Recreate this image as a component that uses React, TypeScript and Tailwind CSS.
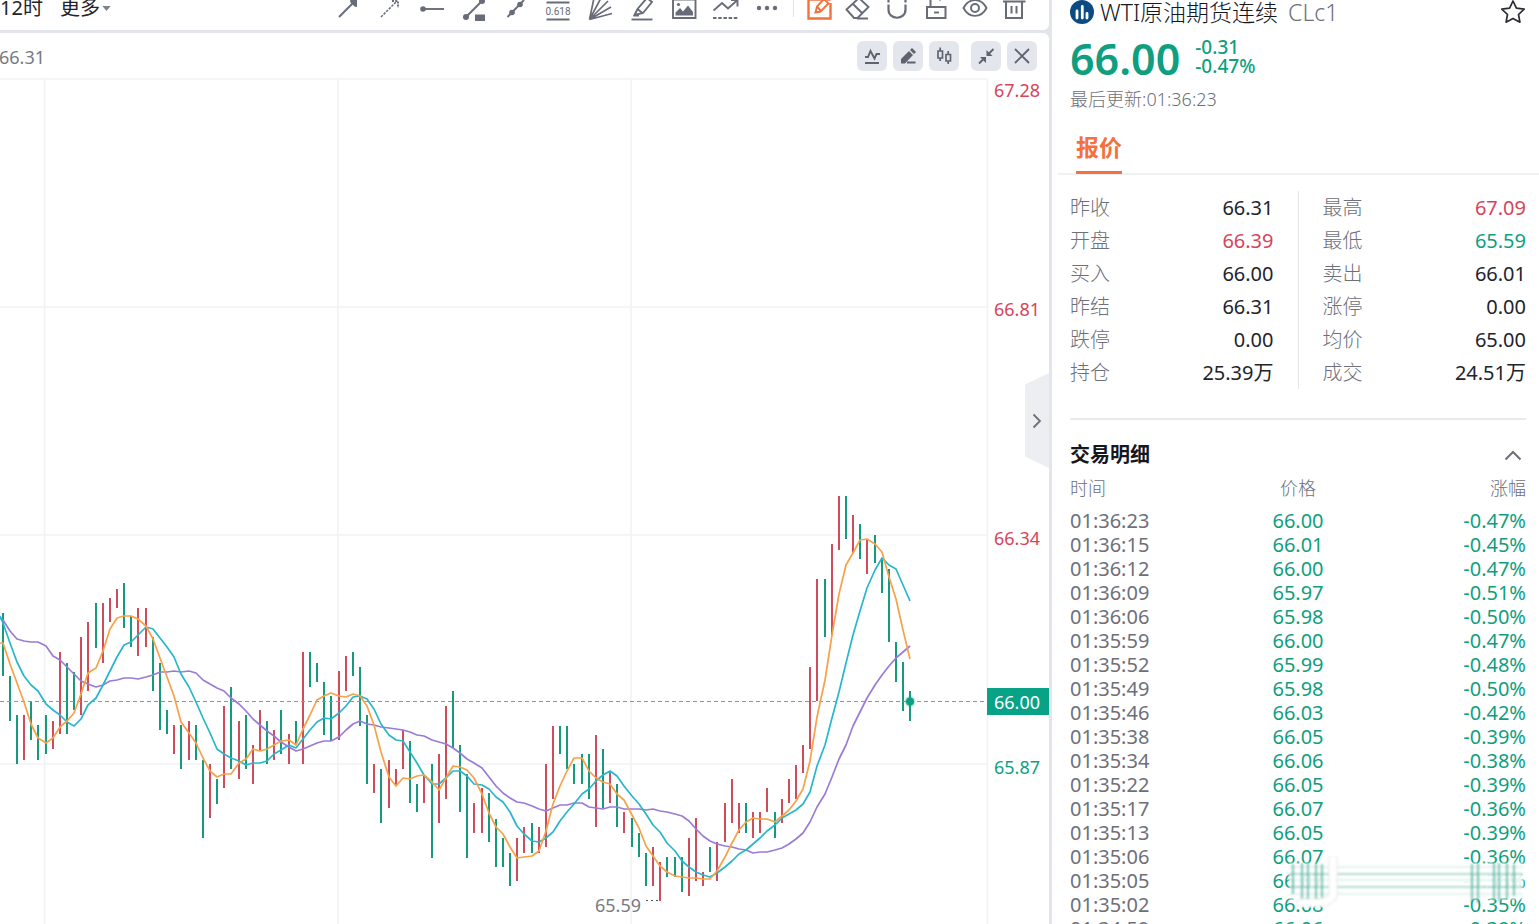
import type { ReactNode } from "react";

type Bar = [top: number, bottom: number, dir: "u" | "d"];

// high / low of each period, in chart units
const bars: Bar[] = [
  [613, 676, "d"], [676, 721, "d"], [715, 764, "d"], [715, 760, "u"], [702, 740, "d"], [725, 760, "d"], [715, 754, "d"], [721, 749, "u"],
  [652, 734, "u"], [663, 734, "d"], [672, 710, "d"], [637, 715, "u"], [622, 691, "u"], [603, 648, "d"], [603, 663, "u"], [598, 622, "u"],
  [589, 608, "u"], [583, 628, "d"], [616, 647, "d"], [608, 656, "u"], [608, 647, "u"], [637, 691, "d"], [663, 730, "d"], [710, 734, "d"],
  [725, 754, "u"], [725, 769, "d"], [721, 760, "u"], [725, 760, "d"], [760, 838, "d"], [764, 818, "u"], [779, 804, "d"], [706, 788, "u"],
  [687, 769, "d"], [721, 779, "u"], [715, 769, "d"], [745, 784, "u"], [710, 751, "u"], [721, 764, "d"], [730, 760, "u"], [710, 754, "d"],
  [734, 764, "u"], [721, 745, "d"], [652, 764, "u"], [652, 687, "d"], [663, 682, "d"], [682, 735, "d"], [696, 741, "d"], [671, 740, "u"],
  [656, 691, "u"], [652, 676, "d"], [667, 726, "d"], [715, 784, "d"], [764, 793, "u"], [769, 823, "d"], [760, 808, "u"], [769, 785, "u"],
  [730, 769, "u"], [741, 803, "d"], [784, 812, "d"], [775, 803, "u"], [764, 858, "d"], [754, 823, "u"], [706, 799, "u"], [691, 748, "d"],
  [745, 812, "d"], [774, 858, "d"], [803, 833, "u"], [788, 833, "u"], [793, 842, "d"], [819, 867, "d"], [838, 867, "d"], [853, 886, "d"],
  [838, 881, "u"], [827, 853, "u"], [823, 853, "d"], [827, 853, "u"], [764, 847, "u"], [726, 799, "u"], [726, 754, "d"], [726, 769, "d"],
  [764, 784, "d"], [754, 784, "d"], [754, 799, "d"], [735, 827, "u"], [749, 808, "d"], [773, 803, "u"], [784, 827, "d"], [812, 833, "u"],
  [818, 847, "d"], [833, 857, "d"], [853, 886, "d"], [847, 886, "u"], [862, 901, "u"], [857, 877, "d"], [857, 877, "d"], [857, 892, "d"],
  [838, 896, "u"], [818, 881, "u"], [872, 886, "u"], [847, 872, "d"], [842, 881, "u"], [803, 842, "u"], [779, 823, "u"], [803, 833, "u"],
  [803, 833, "d"], [812, 838, "u"], [812, 833, "u"], [788, 812, "u"], [812, 838, "d"], [799, 823, "u"], [779, 803, "u"], [765, 799, "u"],
  [745, 773, "u"], [667, 749, "u"], [579, 701, "u"], [579, 637, "d"], [544, 635, "u"], [496, 550, "u"], [496, 539, "d"], [515, 553, "u"],
  [524, 559, "d"], [539, 574, "u"], [535, 563, "d"], [559, 593, "d"], [569, 642, "d"], [642, 682, "d"], [662, 711, "d"], [691, 721, "d"],
];

const ma5 = [
  643, 664, 683, 702, 724, 738, 743, 738, 727, 721, 713, 694, 673, 668, 651, 629, 618, 616, 616, 619, 626, 639, 658, 677, 696, 722, 733, 743,
  758, 771, 777, 774, 774, 763, 759, 749, 751, 749, 745, 741, 740, 745, 729, 715, 700, 696, 693, 696, 697, 694, 696, 706, 725, 752, 777, 786,
  778, 779, 776, 775, 782, 790, 778, 766, 767, 770, 778, 794, 813, 827, 834, 847, 858, 857, 856, 851, 831, 804, 786, 771, 758, 758, 771, 778,
  782, 784, 794, 800, 815, 828, 846, 856, 866, 872, 876, 877, 878, 878, 879, 879, 871, 857, 843, 830, 822, 818, 819, 819, 822, 816, 810, 801,
  789, 761, 717, 680, 635, 594, 565, 553, 540, 539, 544, 552, 577, 599, 630, 659,
];

const ma10 = [
  623, 643, 662, 676, 685, 691, 704, 710, 715, 722, 726, 719, 705, 698, 685, 671, 657, 645, 642, 635, 627, 629, 638, 647, 657, 674, 687, 702,
  718, 733, 749, 754, 758, 761, 765, 763, 763, 761, 754, 750, 745, 748, 739, 730, 722, 718, 719, 713, 706, 697, 696, 699, 709, 724, 735, 740,
  741, 752, 763, 775, 784, 784, 778, 771, 771, 776, 784, 785, 789, 797, 802, 812, 826, 834, 841, 842, 838, 832, 821, 812, 804, 794, 789, 781,
  775, 771, 776, 786, 796, 804, 814, 825, 832, 843, 851, 861, 867, 872, 875, 877, 873, 867, 861, 854, 850, 844, 838, 831, 825, 818, 814, 810,
  804, 792, 766, 745, 718, 692, 663, 635, 611, 588, 570, 558, 565, 569, 585, 601,
];

const ma20 = [
  620, 631, 639, 641, 642, 642, 646, 656, 660, 667, 674, 681, 684, 687, 685, 681, 680, 678, 678, 679, 677, 675, 672, 672, 671, 672, 671, 673,
  680, 684, 688, 691, 698, 704, 711, 719, 725, 731, 736, 742, 747, 751, 749, 746, 743, 741, 741, 737, 730, 724, 721, 724, 725, 727, 728, 729,
  730, 732, 735, 736, 740, 742, 744, 748, 753, 759, 763, 768, 777, 786, 793, 798, 802, 803, 806, 809, 811, 808, 805, 805, 803, 803, 807, 808,
  809, 807, 807, 809, 809, 809, 810, 809, 811, 812, 814, 816, 821, 829, 836, 841, 844, 846, 847, 849, 850, 853, 852, 852, 850, 848, 844, 839,
  833, 822, 807, 794, 777, 759, 745, 726, 712, 698, 685, 675, 666, 658, 652, 646,
];

const axis = [
  { y: 79, label: "67.28", text: 97, up: true },
  { y: 307, label: "66.81", text: 316, up: true },
  { y: 535, label: "66.34", text: 545, up: true },
  { y: 764, label: "65.87", text: 774, up: false },
];

const quotes = [
  ["昨收", "66.31", "text-[#22242c]"],
  ["开盘", "66.39", "text-[#d6455a]"],
  ["买入", "66.00", "text-[#22242c]"],
  ["昨结", "66.31", "text-[#22242c]"],
  ["跌停", "0.00", "text-[#22242c]"],
  ["持仓", "25.39万", "text-[#22242c]"],
];

const quotes2 = [
  ["最高", "67.09", "text-[#d6455a]"],
  ["最低", "65.59", "text-[#0f9f80]"],
  ["卖出", "66.01", "text-[#22242c]"],
  ["涨停", "0.00", "text-[#22242c]"],
  ["均价", "65.00", "text-[#22242c]"],
  ["成交", "24.51万", "text-[#22242c]"],
];

const trades = [
  ["01:36:23", "66.00", "-0.47%"],
  ["01:36:15", "66.01", "-0.45%"],
  ["01:36:12", "66.00", "-0.47%"],
  ["01:36:09", "65.97", "-0.51%"],
  ["01:36:06", "65.98", "-0.50%"],
  ["01:35:59", "66.00", "-0.47%"],
  ["01:35:52", "65.99", "-0.48%"],
  ["01:35:49", "65.98", "-0.50%"],
  ["01:35:46", "66.03", "-0.42%"],
  ["01:35:38", "66.05", "-0.39%"],
  ["01:35:34", "66.06", "-0.38%"],
  ["01:35:22", "66.05", "-0.39%"],
  ["01:35:17", "66.07", "-0.36%"],
  ["01:35:13", "66.05", "-0.39%"],
  ["01:35:06", "66.07", "-0.36%"],
  ["01:35:05", "66.07", "-0.36%"],
  ["01:35:02", "66.08", "-0.35%"],
  ["01:34:59", "66.06", "-0.38%"],
];

const barX = (i: number) => Math.floor(2.2 + 7.147 * i);
const linePoints = (ys: number[]) => ys.map((y, i) => `${barX(i) + 1},${y}`).join(" ");

function Icon({ children }: { children: ReactNode }) {
  return (
    <svg viewBox="0 0 26 26" className="block size-[26px]" fill="none" stroke="currentColor" strokeWidth="1.9">
      {children}
    </svg>
  );
}

function ToolButton({ label, children }: { label: string; children: ReactNode }) {
  return (
    <button type="button" aria-label={label} className="block">
      <Icon>{children}</Icon>
    </button>
  );
}

function SquareButton({ label, children }: { label: string; children: ReactNode }) {
  return (
    <button type="button" aria-label={label} className="flex size-[30px] items-center justify-center rounded-md bg-[#e4e6ed] text-[#5f636f]">
      <Icon>{children}</Icon>
    </button>
  );
}

function Toolbar() {
  return (
    <header className="-mt-[14px] flex h-[44px] items-center rounded-br-md bg-white pr-[22px] text-[#686c78]">
      <button type="button" className="text-xl text-[#22242c]">12时</button>
      <button type="button" className="ml-[17px] flex items-center text-xl text-[#22242c]">
        更多
        <svg viewBox="0 0 10 6" className="ml-0.5 h-[5px] w-[9px] fill-[#80838d]"><path d="M0 0h10L5 6z" /></svg>
      </button>
      <div className="ml-auto flex gap-4">
        <ToolButton label="箭头">
          <path d="M4 22L20 6" /><path d="M15 5H22V12L19.500 11.500L15.500 7.500z" fill="currentColor" stroke="none" />
        </ToolButton>
        <ToolButton label="虚线箭头">
          <path d="M4 22L20 6" strokeDasharray="2.500 1.200" strokeWidth="1.500" /><path d="M15 6h6v7" strokeDasharray="2 1.200" />
        </ToolButton>
        <ToolButton label="射线">
          <path d="M3 14h22" /><circle cx="4" cy="14" r="2.800" fill="currentColor" stroke="none" />
        </ToolButton>
        <ToolButton label="线段">
          <path d="M5 22L21 6" /><circle cx="5" cy="22" r="3" fill="currentColor" stroke="none" /><circle cx="21" cy="6" r="3" fill="currentColor" stroke="none" />
          <path d="M14 19.500h10v6.500H14z" fill="currentColor" stroke="none" />
        </ToolButton>
        <ToolButton label="直线">
          <path d="M4.500 22L21 5" /><circle cx="9" cy="17.500" r="2.800" fill="currentColor" stroke="none" /><circle cx="17" cy="9.500" r="2.800" fill="currentColor" stroke="none" />
        </ToolButton>
        <ToolButton label="黄金分割">
          <path d="M1.500 7.500h23M1.500 24.500h23" />
          <text x="13" y="20" textAnchor="middle" fontSize="10" fill="currentColor" stroke="none" className="font-['Roboto']">0.618</text>
        </ToolButton>
        <ToolButton label="扇形线">
          <path d="M2.500 24.500L7 3M2.500 24.500L14 3M2.500 24.500L21 6M2.500 24.500L24 12M2.500 24.500L25 18.500" strokeWidth="1.700" />
        </ToolButton>
        <ToolButton label="荧光笔">
          <path d="M2.500 24.500h21" /><path d="M5.500 20l3-6L18 3l5 4-9 11zM8.500 14l5.500 4.500M5 20.500h5" />
        </ToolButton>
        <ToolButton label="图片">
          <path d="M2 4.500h22.500v18.500H2z" /><path d="M4.500 20.500v-3l4.500-4.500 3 3.500 5-6 5 6.500v3.500z" fill="currentColor" stroke="none" />
          <circle cx="7.500" cy="9.500" r="1.600" fill="currentColor" stroke="none" />
        </ToolButton>
        <ToolButton label="趋势">
          <path d="M0.500 15.500l8.500-7.500 6 5.500L24.500 5M18 5h6.500v6.500" /><path d="M0 23h27" strokeDasharray="3.500 1.700" />
        </ToolButton>
        <ToolButton label="更多工具">
          <g fill="currentColor" stroke="none"><circle cx="4" cy="13" r="2.200" /><circle cx="12" cy="13" r="2.200" /><circle cx="20" cy="13" r="2.200" /></g>
        </ToolButton>
      </div>
      <div className="ml-3 h-[18px] w-px bg-[#dfe1e8]" />
      <div className="ml-3 flex gap-[13px]">
        <button type="button" aria-label="编辑" className="block text-[#f4713f]">
          <Icon>
            <path d="M16 4.500H2.500v19H24.500V8M21 4.500h3.500" strokeWidth="2.400" /><path d="M9.500 17.500l1.500-6L18 4l4.500 4.500-8 8zM11 11.500l4 4.500" />
          </Icon>
        </button>
        <ToolButton label="橡皮擦">
          <path d="M1.500 14.500L14 3l9.500 9L12.500 23H9zM8 9l9.500 9.500M12 23.500h11" />
        </ToolButton>
        <ToolButton label="磁吸">
          <path d="M4.500 3v11.500c0 11 17 11 17 0V3" strokeWidth="2.200" /><path d="M2.500 8.500h5M18.500 8.500h5" stroke="white" strokeWidth="2" />
        </ToolButton>
        <ToolButton label="锁定">
          <path d="M4 12h18.500v11H4zM7.500 12V5.500c0-4 9-4 9.500 0" strokeWidth="2" /><path d="M11 17.500h5" />
        </ToolButton>
        <ToolButton label="显示">
          <path d="M1.500 13C7 2.500 19 2.500 24.500 13 19 23.500 7 23.500 1.500 13z" /><circle cx="13" cy="13" r="4" strokeWidth="2" />
        </ToolButton>
        <ToolButton label="删除">
          <path d="M2 6.500h22.500M5 6.500v16.500h16V6.500M8.500 3h9M10.500 11v7.500M15.500 11v7.500" strokeWidth="2" />
        </ToolButton>
      </div>
    </header>
  );
}

function ChartHeader() {
  return (
    <div className="flex h-[45px] items-center pr-3">
      <span className="-ml-px pt-0.5 text-lg text-[#777a85]">66.31</span>
      <div className="ml-auto flex gap-1.5">
        <SquareButton label="指标">
          <path d="M6 14h3l2.500-6 4 7.500 2-4.500H21M6 20h14" />
        </SquareButton>
        <SquareButton label="画线">
          <path d="M6 20.500v-4.500l8-8 4 4-8 8.500zM15 7l2-2 4 4-2 2z" fill="currentColor" stroke="none" /><path d="M12 19.500h8.500" strokeWidth="2" />
        </SquareButton>
        <SquareButton label="K线样式">
          <path d="M7 8h4.500v7H7zM15 11.500h4.500v6.500H15zM9.200 4.500V8M9.200 15v3M17.200 8v3.500M17.200 18v3" strokeWidth="1.700" />
        </SquareButton>
      </div>
      <div className="ml-3 flex gap-1.5">
        <SquareButton label="缩小">
          <path d="M20.500 6l-6 6M6 20.500l6-6" /><path d="M13.500 7v6h6zM7 14h6v6z" fill="currentColor" stroke="none" />
        </SquareButton>
        <SquareButton label="关闭">
          <path d="M6 6l14 14M20 6L6 20" />
        </SquareButton>
      </div>
    </div>
  );
}

function PriceChart() {
  return (
    <svg viewBox="0 78 1049 846" className="block h-auto w-full" role="img" aria-label="价格走势">
      <g stroke="#f1f2f4" strokeWidth="1.500">
        {axis.map((a) => <path key={a.label} d={`M0 ${a.y}H987`} />)}
        <path d="M44.500 79V924M338 79V924M631 79V924M987.500 79V924" />
      </g>
      {bars.map(([top, bottom, dir], i) => (
        <rect key={i} x={barX(i)} y={top} width="2" height={bottom - top} fill={dir === "u" ? "#cf4c5c" : "#159a7e"} />
      ))}
      <path d="M0 701.500H987" stroke="#55b39c" strokeDasharray="4 3" />
      <g fill="none" strokeWidth="1.700" strokeLinejoin="round">
        <polyline points={"0,618 " + linePoints(ma20)} stroke="#9a7bd8" />
        <polyline points={"0,616 " + linePoints(ma10)} stroke="#29b6cd" />
        <polyline points={"0,643 " + linePoints(ma5)} stroke="#f7a14a" />
      </g>
      <circle cx="910" cy="701.500" r="5.500" fill="#159a7e" opacity="0.250" />
      <circle cx="910" cy="701.500" r="4" fill="#0fa083" />
      <path d="M646 900.500H661" stroke="#4b4e57" strokeDasharray="2 3" />
      <rect x="987" y="688" width="62" height="27" fill="#08a387" />
      <g fontSize="18">
        {axis.map((a) => (
          <text key={a.label} x="994" y={a.text} fill={a.up ? "#d6455a" : "#0f9f80"}>{a.label}</text>
        ))}
        <text x="994" y="709" fill="#fff">66.00</text>
        <text x="595" y="912" fill="#777a85">65.59</text>
      </g>
    </svg>
  );
}

function QuoteList({ items }: { items: string[][] }) {
  return (
    <dl className="flex-1 text-xl">
      {items.map(([name, value, color]) => (
        <div key={name} className="flex h-[33px] items-center justify-between">
          <dt className="font-light text-[#6d707b]">{name}</dt>
          <dd className={color}>{value}</dd>
        </div>
      ))}
    </dl>
  );
}

// blurred mark lying over the last trades
function Smudge() {
  return (
    <svg viewBox="0 0 244 52" className="pointer-events-none absolute top-[856px] right-[10px] h-[52px] w-[244px]">
      <defs>
        <filter id="soft" x="-5%" y="-10%" width="110%" height="120%"><feGaussianBlur stdDeviation="0.800" /></filter>
      </defs>
      <g filter="url(#soft)">
        <rect x="4" y="7" width="234" height="36" fill="#fff" opacity="0.900" />
        <path d="M4 18H238M4 31H238" stroke="#86cfbe" strokeWidth="1.500" />
        <path d="M4 11H238M4 24H238M4 38H238" stroke="#e2f4f0" strokeWidth="2" />
        <path d="M8 8v30M17 7v37M23 7v38M31 7v38M37 8v36M187 8v38M193 7v40M209 7v38M214 7v38M222 7v36M229 8v32" stroke="#3fae95" strokeWidth="2.200" opacity="0.750" />
        <path d="M48 3v36c0 4-8 7-14 8H16" stroke="#dedede" strokeWidth="9" fill="none" strokeLinecap="round" />
        <path d="M48 3v36c0 4-8 7-14 8H16" stroke="#fff" strokeWidth="7.500" fill="none" strokeLinecap="round" />
      </g>
    </svg>
  );
}

function QuotePanel() {
  return (
    <aside className="relative w-[487px] shrink-0 overflow-hidden bg-white">
      <div className="pr-[13px] pl-[18px]">
        <div className="flex h-6 items-center">
          <svg viewBox="0 0 24 24" className="size-6">
            <circle cx="12" cy="12" r="12" fill="#0b4a82" />
            <path d="M7 11v7M12.300 6.500v11.500M17 13.500v4.500" stroke="#fff" strokeWidth="2.800" strokeLinecap="round" />
          </svg>
          <h1 className="ml-1.5 text-[23px] font-light text-[#15171f]">WTI原油期货连续</h1>
          <span className="ml-2.5 text-[23px] font-light text-[#6d707b]">CLc1</span>
          <button type="button" aria-label="收藏" className="ml-auto">
            <svg viewBox="0 0 26 26" className="block size-[26px]" fill="none" stroke="#2a2c34" strokeWidth="1.700" strokeLinejoin="round">
              <path d="M13 2l3.400 7.100 7.800 1-5.700 5.400 1.400 7.700-6.900-3.700-6.900 3.700 1.400-7.700-5.700-5.400 7.800-1z" />
            </svg>
          </button>
        </div>
        <div className="mt-[14px] flex h-10 items-start text-[#0f9f80]">
          <strong className="text-[43px] leading-[42px] font-semibold">66.00</strong>
          <div className="ml-[15px] text-[19px] leading-[19px] font-medium">
            <div>-0.31</div>
            <div>-0.47%</div>
          </div>
        </div>
        <p className="mt-[9px] text-lg leading-6 font-light text-[#6d707b]">最后更新:01:36:23</p>
      </div>
      <nav className="mt-[22px] ml-1.5 flex border-b-2 border-[#f0f1f3] pl-[18px]">
        <a href="#quote" className="-mb-px border-b-3 border-[#f4713f] pb-[10px] text-[23px] leading-7 font-bold text-[#f4713f]">报价</a>
      </nav>
      <div className="pr-[13px] pl-[18px]">
        <div className="mt-4 flex">
          <QuoteList items={quotes} />
          <div className="mx-6 w-px bg-[#e6e7eb]" />
          <QuoteList items={quotes2} />
        </div>
        <hr className="mt-[29px] border-t-2 border-[#e9eaed]" />
        <div className="mt-5 flex h-[30px] items-center justify-between">
          <h2 className="text-xl font-bold text-[#15171f]">交易明细</h2>
          <button type="button" aria-label="收起" className="mr-[3px]">
            <svg viewBox="0 0 20 12" className="block h-3 w-5" fill="none" stroke="#6d707b" strokeWidth="2"><path d="M2.500 10.500L10 3l7.500 7.500" /></svg>
          </button>
        </div>
        <table className="w-full table-fixed text-xl">
          <thead>
            <tr className="h-[39px] text-lg text-[#6d707b]">
              <th className="pb-[3px] text-left font-light">时间</th>
              <th className="pb-[3px] text-center font-light">价格</th>
              <th className="pb-[3px] text-right font-light">涨幅</th>
            </tr>
          </thead>
          <tbody className="leading-6 text-[#0f9f80]">
            {trades.map(([time, price, change]) => (
              <tr key={time} className="h-6">
                <td className="text-left text-[#6d707b]">{time}</td>
                <td className="text-center">{price}</td>
                <td className="text-right">{change}</td>
              </tr>
            ))}
          </tbody>
        </table>
      </div>
      <Smudge />
    </aside>
  );
}

export default function App() {
  return (
    <div className="flex h-screen gap-[3px] overflow-hidden bg-[#e3e5ed] font-['Noto_Sans','Noto_Sans_CJK_SC',sans-serif]">
      <main className="relative flex min-w-0 flex-1 flex-col gap-[3px]">
        <Toolbar />
        <section className="flex-1 rounded-tr-md bg-white">
          <ChartHeader />
          <PriceChart />
        </section>
        <button
          type="button"
          aria-label="展开侧栏"
          className="absolute top-[373px] right-0 flex h-[95px] w-6 items-center justify-center bg-[#eceef2] [clip-path:polygon(0_12%,100%_0,100%_100%,0_88%)]"
        >
          <svg viewBox="0 0 12 16" className="h-4 w-3" fill="none" stroke="#6d707b" strokeWidth="1.800"><path d="M2.500 1.500L9 8l-6.500 6.500" /></svg>
        </button>
      </main>
      <QuotePanel />
    </div>
  );
}
